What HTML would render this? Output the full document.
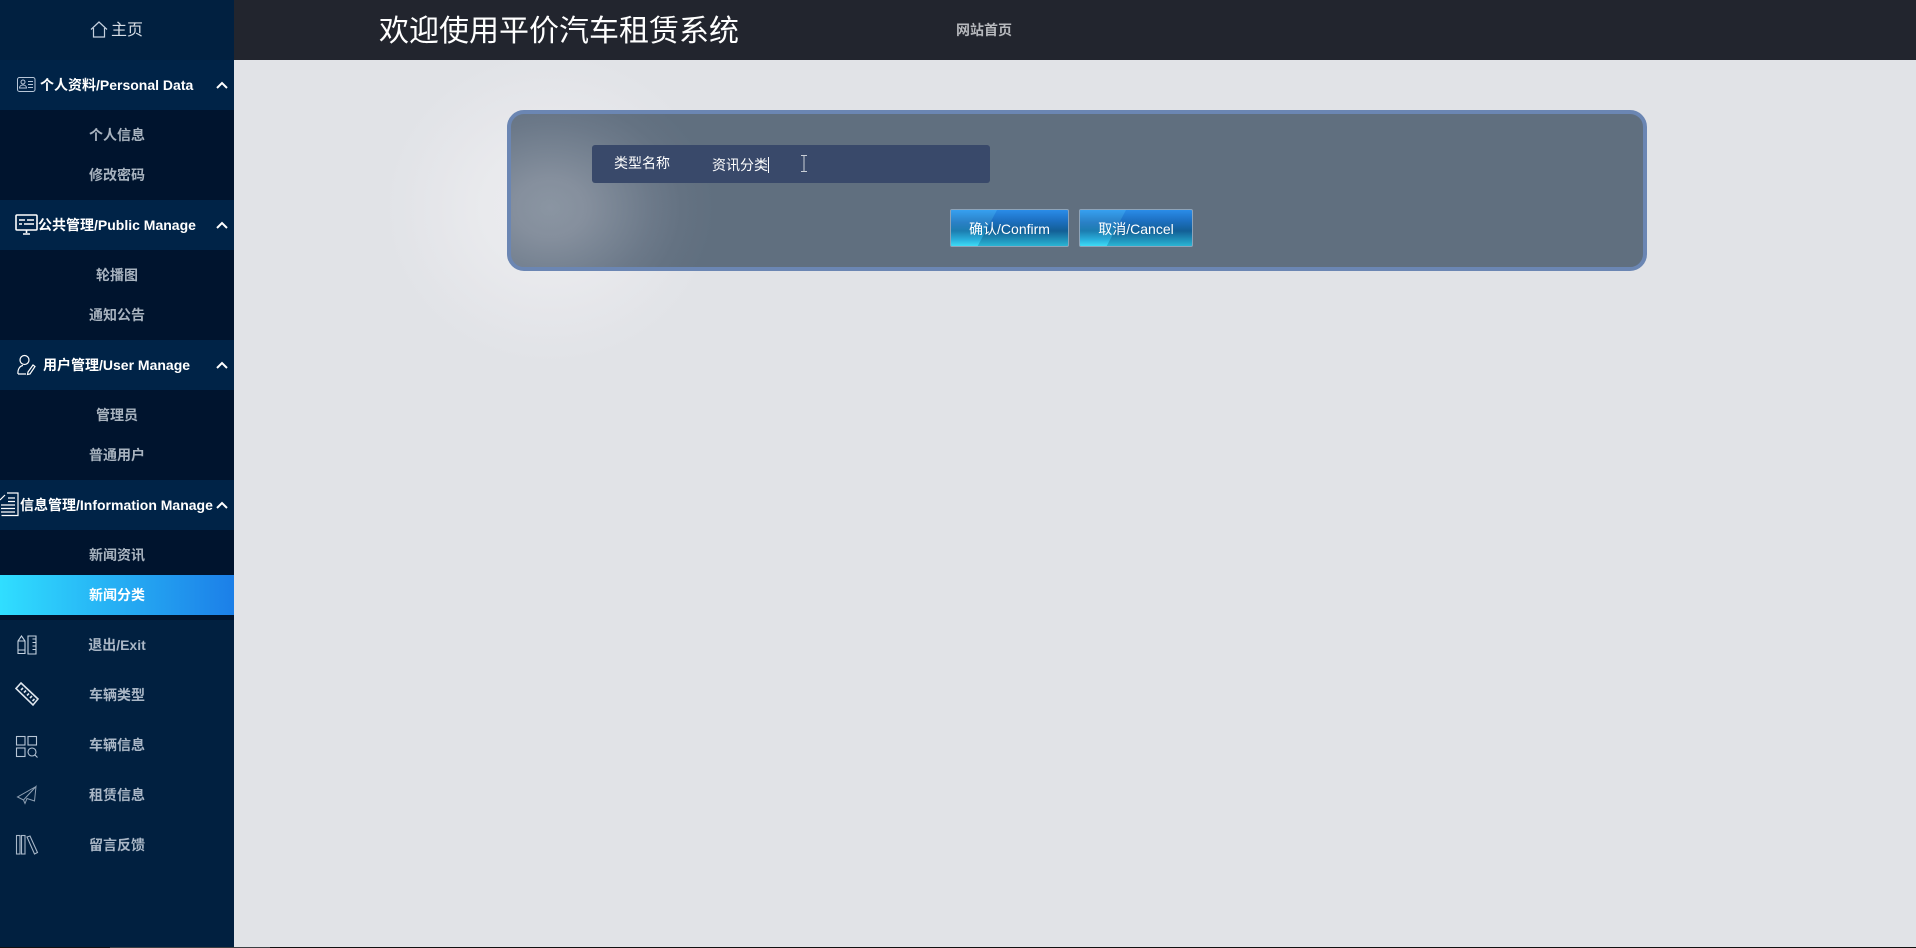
<!DOCTYPE html>
<html lang="zh-CN"><head><meta charset="utf-8"><title>新闻分类</title>
<style>
*{box-sizing:border-box;margin:0;padding:0}
html,body{width:1916px;height:948px;overflow:hidden;background:#e1e3e7;font-family:"Liberation Sans","Noto Sans CJK SC",sans-serif}
.a{position:absolute}
#main{left:234px;top:60px;width:1682px;height:887px;background:radial-gradient(ellipse 165px 155px at 316px 148px,#ebecef 0%,#e9eaed 40%,#e5e6ea 70%,#e1e3e7 100%)}
#side{left:0;top:0;width:234px;height:947px;background:#012040}
#head{left:234px;top:0;width:1682px;height:60px;background:#22252e}
.t{position:absolute;left:0;width:234px;text-align:center;font-size:14px;font-weight:bold;line-height:20px;white-space:nowrap}
.g{color:#fff}
.s{color:#a8b3bf}
.r{color:#aab7c6}
.sub{position:absolute;left:0;width:234px;height:90px;background:#00142e}
.gh{position:absolute;left:0;width:234px;height:50px;background:#002347}
svg{position:absolute;overflow:visible;fill:none}
.panel{left:507px;top:110px;width:1140px;height:161px;border:4px solid #6b86b3;border-radius:17px;background:radial-gradient(ellipse 165px 135px at 39px 94px,#8a95a2 0%,#858f9d 22%,#788493 42%,#6c7989 62%,#647282 80%,#606f7f 100%);background-color:#606f7f}
.btn{position:absolute;top:209px;height:38px;border:1px solid #8ea3b8;border-radius:2px;color:#fff;font-size:14px;line-height:38px;text-align:center;background:linear-gradient(180deg,#2a8ce8 0%,#1d70c2 30%,#135f96 58%,#1f8fb9 82%,#2bb4d3 100%);overflow:hidden}
.btn i{position:absolute;left:0;top:0;bottom:0;width:46px;clip-path:polygon(0 0,100% 0,58% 100%,0 100%);background:linear-gradient(180deg,#37a0f0 0%,#2a80c5 35%,#1c7db0 58%,#29aedb 82%,#3fdcf5 100%)}
.btn span{position:relative}
</style></head><body>
<div id="main" class="a"></div>
<div id="side" class="a"></div>
<div id="head" class="a"></div>
<div class="a" style="left:379px;top:11px;font-size:30px;line-height:42px;color:#fff;white-space:nowrap">欢迎使用平价汽车租赁系统</div>
<div class="a" style="left:956px;top:20px;font-size:14px;line-height:20px;font-weight:bold;color:#b6b8bc;white-space:nowrap">网站首页</div>

<!-- top -->
<svg style="left:90px;top:21px" width="18" height="17" viewBox="0 0 18 17" stroke="#c5d0de" stroke-width="1.2"><path d="M1 8.5 9 1l8 7.5M3.5 7v9h11V7"/></svg>
<div class="a" style="left:111px;top:20px;font-size:16px;line-height:22px;color:#d8dee6;white-space:nowrap">主页</div>

<!-- group 1 -->
<div class="gh" style="top:60px"></div>
<svg style="left:17px;top:77px" width="19" height="15" viewBox="0 0 19 15" stroke="#b8c6d8" stroke-width="1"><rect x=".5" y=".5" width="17.5" height="14" rx="2"/><circle cx="6" cy="5" r="2"/><path d="M2.5 11c0-4 7-4 7 0zM11 4.5h5M11 7.5h5M11 10.5h5"/></svg>
<div class="t g" style="left:40px;width:auto;top:75px">个人资料/Personal Data</div>
<svg style="left:216px;top:81px" width="12" height="8" viewBox="0 0 12 8" stroke="#fff" stroke-width="2"><path d="M1 7l5-5 5 5"/></svg>
<div class="sub" style="top:110px"></div>
<div class="t s" style="top:125px">个人信息</div>
<div class="t s" style="top:165px">修改密码</div>

<!-- group 2 -->
<div class="gh" style="top:200px"></div>
<svg style="left:15px;top:214px" width="23" height="21" viewBox="0 0 23 21" stroke="#fff" stroke-width="1.6"><rect x="1" y="1" width="21" height="15" rx="1"/><path d="M4 6h6M12 6h7M4 10h3M9 10h10M11.500 16v3M8 20h7"/></svg>
<div class="t g" style="left:38px;width:auto;top:215px">公共管理/Public Manage</div>
<svg style="left:216px;top:221px" width="12" height="8" viewBox="0 0 12 8" stroke="#fff" stroke-width="2"><path d="M1 7l5-5 5 5"/></svg>
<div class="sub" style="top:250px"></div>
<div class="t s" style="top:265px">轮播图</div>
<div class="t s" style="top:305px">通知公告</div>

<!-- group 3 -->
<div class="gh" style="top:340px"></div>
<svg style="left:17px;top:355px" width="20" height="20" viewBox="0 0 20 20" stroke="#fff" stroke-width="1.2"><circle cx="7.500" cy="5" r="4.500"/><path d="M1 19c-.5-5 2-8 5-8.500M1 19h8M16 10l2 1.500-5 7.500-2.500.5.500-2.500z"/></svg>
<div class="t g" style="left:43px;width:auto;top:355px">用户管理/User Manage</div>
<svg style="left:216px;top:361px" width="12" height="8" viewBox="0 0 12 8" stroke="#fff" stroke-width="2"><path d="M1 7l5-5 5 5"/></svg>
<div class="sub" style="top:390px"></div>
<div class="t s" style="top:405px">管理员</div>
<div class="t s" style="top:445px">普通用户</div>

<!-- group 4 -->
<div class="gh" style="top:480px"></div>
<svg style="left:0;top:492px" width="19" height="25" viewBox="0 0 19 25" stroke="#fff" stroke-width="1.2"><path d="M7 1h11v22.500H1.500M0 8l5-5M8 6h7M8 9.500h7M1 13h14M1 16.500h14M1 20h14"/></svg>
<div class="t g" style="left:20px;width:auto;top:495px">信息管理/Information Manage</div>
<svg style="left:216px;top:501px" width="12" height="8" viewBox="0 0 12 8" stroke="#fff" stroke-width="2"><path d="M1 7l5-5 5 5"/></svg>
<div class="sub" style="top:530px"></div>
<div class="t s" style="top:545px">新闻资讯</div>
<div class="a" style="left:0;top:575px;width:234px;height:40px;background:linear-gradient(90deg,#30deff 0%,#1c7fe8 100%)"></div>
<div class="t g" style="top:585px">新闻分类</div>

<!-- plain rows -->
<svg style="left:17px;top:635px" width="20" height="20" viewBox="0 0 20 20" stroke="#c5d2e0" stroke-width="1.1"><path d="M1 18.500V6l3.500-5L8 6v12.500zM1 6h7M1 15h7M11 1h8v18h-8zM15.500 4H19M15.500 7.500H19M15.500 11H19M15.500 14.500H19"/></svg>
<div class="t r" style="top:635px">退出/Exit</div>
<svg style="left:15px;top:682px" width="24" height="24" viewBox="0 0 24 24" stroke="#dfe6ee" stroke-width="1.6"><path d="M6 1 23 17l-5 6L1 6.500zM8 6l-2 2M11 8.500l-2 2M14 11.500l-2 2M17 14l-2 2M19.500 17l-2 2"/></svg>
<div class="t r" style="top:685px">车辆类型</div>
<svg style="left:16px;top:736px" width="22" height="22" viewBox="0 0 22 22" stroke="#b7c5d5" stroke-width="1.1"><rect x=".5" y=".5" width="8.500" height="8.500"/><rect x="12" y=".5" width="8.500" height="8.500"/><rect x=".5" y="12" width="8.500" height="8.500"/><circle cx="16" cy="16" r="4"/><path d="M19 19l2.500 2.500"/></svg>
<div class="t r" style="top:735px">车辆信息</div>
<svg style="left:17px;top:786px" width="20" height="18" viewBox="0 0 20 18" stroke="#8fa0b3" stroke-width="1"><path d="M19 .5 .5 11l6 3L19 .5 17.500 15 10 12.500 8 17.500 6.500 14"/></svg>
<div class="t r" style="top:785px">租赁信息</div>
<svg style="left:16px;top:835px" width="22" height="20" viewBox="0 0 22 20" stroke="#a8b7c8" stroke-width="1.1"><rect x=".5" y=".5" width="3.500" height="18.500"/><rect x="5.500" y=".5" width="3.500" height="18.500"/><path d="M11 2l3-1 7.500 16.500-3 1.500z"/></svg>
<div class="t r" style="top:835px">留言反馈</div>

<!-- panel -->
<div class="a panel"></div>
<div class="a" style="left:592px;top:145px;width:398px;height:38px;background:#39496a;border-radius:3px"></div>
<div class="a" style="left:614px;top:153px;font-size:14px;line-height:20px;color:#fff;white-space:nowrap">类型名称</div>
<div class="a" style="left:712px;top:155px;font-size:14px;line-height:20px;color:#fff;white-space:nowrap">资讯分类</div>
<div class="a" style="left:768px;top:157px;width:1px;height:16px;background:#fff"></div>
<svg style="left:800px;top:155px" width="8" height="17" viewBox="0 0 8 17" stroke="#c9ced6" stroke-width="1"><path d="M1 .5h6M4 .5v16M1 16.500h6"/></svg>

<div class="btn" style="left:950px;width:119px"><i></i><span>确认/Confirm</span></div>
<div class="btn" style="left:1079px;width:114px"><i></i><span>取消/Cancel</span></div>

<!-- bottom line -->
<div class="a" style="left:0;top:947px;width:1916px;height:1px;background:#111"></div>
<div class="a" style="left:110px;top:947px;width:160px;height:1px;background:#3c4043"></div>
</body></html>
